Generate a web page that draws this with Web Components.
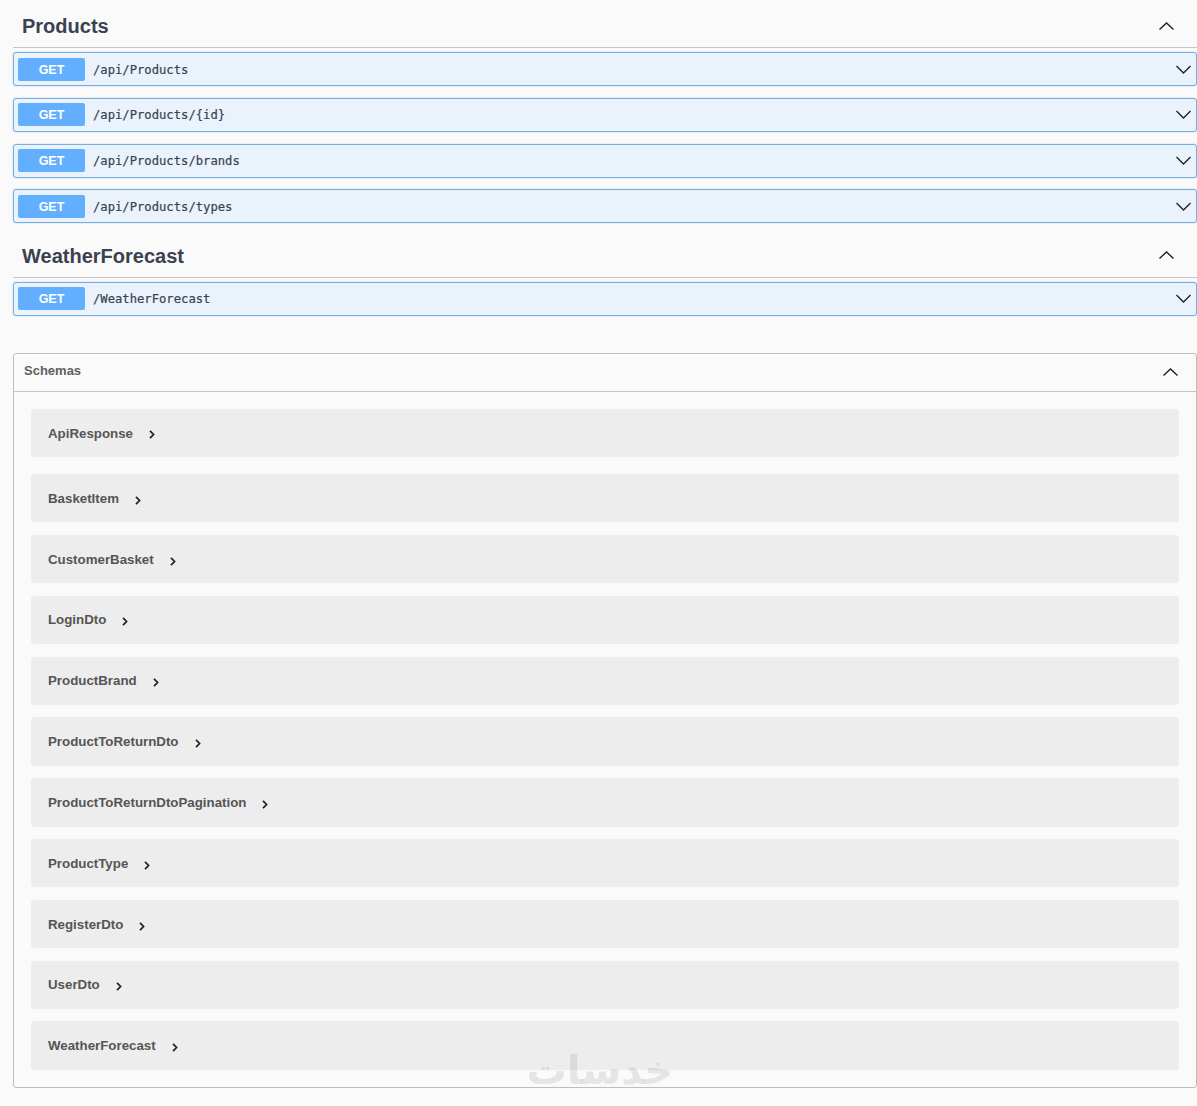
<!DOCTYPE html>
<html>
<head>
<meta charset="utf-8">
<title>Swagger</title>
<style>
  html, body { margin: 0; background: #fafafa; }
  body { font-family: "Liberation Sans", Arial, sans-serif; color: #3b4151; }
</style>
</head>
<body>
<swagger-page>
  <api-tag name="Products">
    <api-op path="/api/Products"></api-op>
    <api-op path="/api/Products/{id}"></api-op>
    <api-op path="/api/Products/brands"></api-op>
    <api-op path="/api/Products/types"></api-op>
  </api-tag>
  <api-tag name="WeatherForecast">
    <api-op path="/WeatherForecast"></api-op>
  </api-tag>
  <schema-box>
    <schema-row name="ApiResponse" class="first"></schema-row>
    <schema-row name="BasketItem" class="second"></schema-row>
    <schema-row name="CustomerBasket"></schema-row>
    <schema-row name="LoginDto"></schema-row>
    <schema-row name="ProductBrand"></schema-row>
    <schema-row name="ProductToReturnDto"></schema-row>
    <schema-row name="ProductToReturnDtoPagination"></schema-row>
    <schema-row name="ProductType"></schema-row>
    <schema-row name="RegisterDto"></schema-row>
    <schema-row name="UserDto"></schema-row>
    <schema-row name="WeatherForecast"></schema-row>
  </schema-box>
</swagger-page>

<script>
const UP = '<svg width="15" height="8" viewBox="0 0 15 8" fill="none" stroke="#222" stroke-width="1.4"><path d="M.5 7.5 7.5 1l7 6.5"/></svg>';
const DOWN = '<svg width="15" height="9" viewBox="0 0 15 9" fill="none" stroke="#222" stroke-width="1.4"><path d="M.5 1 7.5 8l7-7"/></svg>';
const RIGHT = '<svg width="6" height="9" viewBox="0 0 6 9" fill="none" stroke="#222" stroke-width="1.7"><path d="M1 .8 4.6 4.5 1 8.2"/></svg>';

class SwaggerPage extends HTMLElement {
  connectedCallback() {
    this.attachShadow({ mode: 'open' });
    this.shadowRoot.innerHTML = `
      <style>
        :host { display: block; position: relative; height: 1106px; padding-left: 13px; box-sizing: border-box; overflow: hidden; }
        .mark {
          position: absolute; left: 528px; top: 1040px; width: 145px;
          text-align: center; direction: rtl;
          font: 700 40px/60px "DejaVu Sans", sans-serif;
          color: rgba(140, 140, 140, .2);
        }
      </style>
      <slot></slot>
      <div class="mark">خدسات</div>
    `;
  }
}

class ApiTag extends HTMLElement {
  connectedCallback() {
    this.attachShadow({ mode: 'open' });
    this.shadowRoot.innerHTML = `
      <style>
        :host { display: block; }
        .head {
          display: flex; align-items: center; justify-content: space-between;
          height: 48px; box-sizing: border-box; padding: 5px 23px 0 9px;
          border-bottom: 1px solid #c6c7ca; margin-bottom: 4px;
          font-size: 20px; font-weight: 700; color: #3b4151;
        }
        :host(:not(:first-child)) .head { height: 42.4px; padding-top: 1px; margin-top: 12px; }
        svg { display: block; margin-top: -1px; }
        :host(:not(:first-child)) svg { margin-top: -3px; }
      </style>
      <div class="head"><span>${this.getAttribute('name')}</span>${UP}</div>
      <slot></slot>
    `;
  }
}

class ApiOp extends HTMLElement {
  connectedCallback() {
    this.attachShadow({ mode: 'open' });
    this.shadowRoot.innerHTML = `
      <style>
        :host {
          display: flex; align-items: center; height: 34px; box-sizing: border-box;
          margin-bottom: 11.75px; padding: .4px 5px 0 4px;
          background: #eaf3fc; border: 1px solid #72aee8; border-radius: 3px;
          box-shadow: 0 0 2px rgba(0, 0, 0, .19);
        }
        .method {
          width: 67px; height: 23px; border-radius: 2px; background: #61affe; color: #fff;
          font-size: 12.5px; font-weight: 700; line-height: 24px; text-align: center;
        }
        .path {
          flex: 1; margin: 1px 0 0 8px; color: #3b4151;
          font: 400 12.2px "DejaVu Sans Mono", monospace;
          -webkit-text-stroke: .2px #3b4151;
        }
      </style>
      <div class="method">GET</div>
      <div class="path">${this.getAttribute('path')}</div>
      ${DOWN}
    `;
  }
}

class SchemaBox extends HTMLElement {
  connectedCallback() {
    this.attachShadow({ mode: 'open' });
    this.shadowRoot.innerHTML = `
      <style>
        :host {
          display: block; margin-top: 37px; height: 735px; box-sizing: border-box;
          border: 1px solid #bebebe; border-radius: 3px;
        }
        .head {
          display: flex; align-items: center; justify-content: space-between;
          height: 38px; box-sizing: border-box; padding: 0 18px 0 10px;
          border-bottom: 1px solid #c4c4c4;
          font-size: 13px; font-weight: 700; color: #606060;
        }
        .head span { margin-top: -4px; }
        .body { padding: 17px 17px 0; }
      </style>
      <div class="head"><span>Schemas</span>${UP}</div>
      <div class="body"><slot></slot></div>
    `;
  }
}

class SchemaRow extends HTMLElement {
  connectedCallback() {
    this.attachShadow({ mode: 'open' });
    this.shadowRoot.innerHTML = `
      <style>
        :host {
          display: flex; align-items: center; height: 48.4px; box-sizing: border-box;
          margin-top: 12.45px; padding: 2px 0 0 17px;
          background: #ededed; border-radius: 3px;
          font-size: 13.3px; font-weight: 700; color: #555;
        }
        :host(.first) { margin-top: 0; }
        :host(.second) { margin-top: 17px; }
        span { margin-top: -2px; }
        :host(.first) span { margin-top: 0; }
        svg { display: block; margin-left: 16px; margin-top: 2px; }
      </style>
      <span>${this.getAttribute('name')}</span>${RIGHT}
    `;
  }
}

customElements.define('swagger-page', SwaggerPage);
customElements.define('api-tag', ApiTag);
customElements.define('api-op', ApiOp);
customElements.define('schema-box', SchemaBox);
customElements.define('schema-row', SchemaRow);
</script>
</body>
</html>
